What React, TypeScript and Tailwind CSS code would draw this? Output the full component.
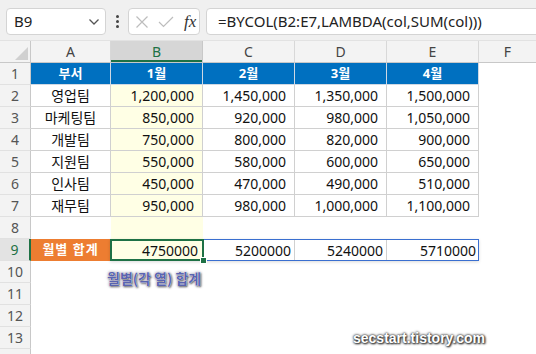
import React from "react";

const rows = [
  ["영업팀", "1,200,000", "1,450,000", "1,350,000", "1,500,000"],
  ["마케팅팀", "850,000", "920,000", "980,000", "1,050,000"],
  ["개발팀", "750,000", "800,000", "820,000", "900,000"],
  ["지원팀", "550,000", "580,000", "600,000", "650,000"],
  ["인사팀", "450,000", "470,000", "490,000", "510,000"],
  ["재무팀", "950,000", "980,000", "1,000,000", "1,100,000"],
];

function RowHead({ n, active }: { n?: number; active?: boolean }) {
  return (
    <div
      className={
        "w-[31px] shrink-0 h-full flex items-center justify-center text-[14px] border-b border-[#e1e1e1] " +
        (active
          ? "bg-[#e3e3e3] text-[#1e7145] border-r-2 border-r-[#1e7145]"
          : "bg-[#f3f3f3] text-[#555] border-r border-r-[#c8c8c8]")
      }
    >
      {n}
    </div>
  );
}

export default function App() {
  return (
    <div className="w-[536px] h-[354px] overflow-hidden bg-white relative font-['Noto_Sans','Noto_Sans_CJK_KR',sans-serif] text-[#111]">
      {/* toolbar */}
      <div className="h-[40px] bg-[#f0f0f0] flex items-start pt-[8px]">
        <div className="ml-[6px] shrink-0 w-[100px] h-[27px] bg-white border border-[#d4d4d4] rounded-[4px] flex items-center justify-between pl-[7px] pr-[5px] text-[15px] text-[#222]">
          <span>B9</span>
          <svg width="12" height="8" viewBox="0 0 12 8">
            <path d="M1.5 1.5 L6 6 L10.5 1.5" fill="none" stroke="#555" strokeWidth="1.3" />
          </svg>
        </div>
        <div className="ml-[10px] shrink-0 w-[3px] h-[27px] flex flex-col items-center justify-center gap-[2px]">
          <div className="w-[3px] h-[3px] rounded-full bg-[#444]" />
          <div className="w-[3px] h-[3px] rounded-full bg-[#444]" />
          <div className="w-[3px] h-[3px] rounded-full bg-[#444]" />
        </div>
        <div className="ml-[9px] shrink-0 w-[72px] h-[27px] bg-white border border-[#d4d4d4] rounded-[4px] flex items-center pl-[6px] gap-[9px]">
          <svg width="14" height="14" viewBox="0 0 14 14">
            <path d="M1.5 1.5 L12.5 12.5 M12.5 1.5 L1.5 12.5" stroke="#bdbdbd" strokeWidth="1.2" />
          </svg>
          <svg width="16" height="13" viewBox="0 0 16 13">
            <path d="M1 7 L5.5 11.5 L15 2" fill="none" stroke="#bdbdbd" strokeWidth="1.2" />
          </svg>
          <span className="font-['Liberation_Serif',serif] italic text-[17px] text-[#333] leading-none ml-[1px]">fx</span>
        </div>
        <div className="ml-[6px] w-[340px] shrink-0 h-[27px] bg-white border border-[#d4d4d4] rounded-[4px] flex items-center pl-[11px] text-[15px] text-[#222]">
          =BYCOL(B2:E7,LAMBDA(col,SUM(col)))
        </div>
      </div>

      {/* column headers */}
      <div className="flex h-[23px] bg-[#f3f3f3] border-t border-[#e2e2e2] border-b border-b-[#c8c8c8] text-[14px] text-[#444]">
        <div className="w-[31px] shrink-0 h-full border-r border-[#c8c8c8] flex items-end justify-end pr-[2px] pb-[2px]">
          <svg width="13" height="13" viewBox="0 0 13 13">
            <path d="M13 0 L13 13 L0 13 Z" fill="#d0d0d0" />
          </svg>
        </div>
        <div className="w-[80px] shrink-0 border-r border-[#d8d8d8] flex items-center justify-center">A</div>
        <div className="w-[92px] shrink-0 bg-[#d6d6d6] text-[#1e7145] shadow-[inset_0_-2px_0_#1e7145] border-r border-[#c8c8c8] flex items-center justify-center">B</div>
        <div className="w-[92px] shrink-0 border-r border-[#d8d8d8] flex items-center justify-center">C</div>
        <div className="w-[92px] shrink-0 border-r border-[#d8d8d8] flex items-center justify-center">D</div>
        <div className="w-[92px] shrink-0 border-r border-[#d8d8d8] flex items-center justify-center">E</div>
        <div className="flex-1 flex items-center justify-center">F</div>
      </div>

      {/* row 1 */}
      <div className="flex h-[22px]">
        <RowHead n={1} />
        {["부서", "1월", "2월", "3월", "4월"].map((t, i) => (
          <div
            key={i}
            className={
              (i === 0 ? "w-[80px]" : "w-[92px]") +
              " shrink-0 bg-[#0070c0] text-white font-bold text-[13px] flex items-center justify-center border-r border-b border-[#cfd8e3]"
            }
          >
            {t}
          </div>
        ))}
      </div>

      {rows.map((r, ri) => (
        <div key={ri} className="flex h-[22px]">
          <RowHead n={ri + 2} />
          <div className="w-[80px] shrink-0 flex items-center justify-center text-[14px] border-r border-b border-[#d0d0d0]">
            {r[0]}
          </div>
          {r.slice(1).map((v, ci) => (
            <div
              key={ci}
              className={
                "w-[92px] shrink-0 flex items-center justify-end pr-[8px] text-[14px] border-r border-b border-[#d0d0d0] " +
                (ci === 0 ? "bg-[#ffffe5]" : "")
              }
            >
              {v}
            </div>
          ))}
        </div>
      ))}

      {/* row 8 */}
      <div className="flex h-[22px]">
        <RowHead n={8} />
        <div className="w-[80px] shrink-0" />
        <div className="w-[92px] shrink-0 bg-[#ffffe5]" />
      </div>

      {/* row 9 */}
      <div className="flex h-[22px]">
        <RowHead n={9} active />
        <div className="w-[79px] shrink-0 bg-[#ed7d31] text-white font-bold text-[13px] flex items-center justify-center tracking-[1px]">
          월별 합계
        </div>
        <div className="relative flex w-[369px] shrink-0 text-[14px]">
          <div className="w-[93px] shrink-0 bg-[#ffffe5] flex items-center justify-end pr-[4px] border-r border-[#d0d0d0]">4750000</div>
          <div className="w-[92px] shrink-0 flex items-center justify-end pr-[3px] border-r border-[#d0d0d0]">5200000</div>
          <div className="w-[92px] shrink-0 flex items-center justify-end pr-[3px] border-r border-[#d0d0d0]">5240000</div>
          <div className="w-[92px] shrink-0 flex items-center justify-end pr-[3px]">5710000</div>
          <div className="absolute inset-0 border border-[#3a6fd0] pointer-events-none shadow-[0_1px_3px_rgba(0,0,0,0.15)]" />
          <div className="absolute left-0 top-0 w-[94px] h-[22px] border-2 border-[#1e7145] pointer-events-none" />
          <div className="absolute left-[90px] top-[18px] w-[7px] h-[7px] bg-[#1e7145] border border-white pointer-events-none" />
        </div>
      </div>

      {[10, 11, 12, 13].map((n) => (
        <div key={n} className="flex h-[22px]">
          <RowHead n={n} />
        </div>
      ))}
      <div className="flex h-[22px]">
        <RowHead />
      </div>

      {/* annotation */}
      <div className="absolute left-[107px] top-[268px] font-['Noto_Sans_CJK_KR',sans-serif] font-bold text-[14px] text-[#5a64b0] [text-shadow:0_0_1px_#fff,0_0_1px_#fff,1px_1px_2px_rgba(0,0,0,0.7),0_0_3px_rgba(40,40,90,0.6)]">
        월별(각 열) 합계
      </div>

      {/* watermark */}
      <div className="absolute left-[353px] top-[328px] font-['Liberation_Sans',sans-serif] font-bold text-[14px] text-white [text-shadow:0_0_2px_#333,1px_1px_2px_#222,0_0_3px_#444]">
        secstart.tistory.com
      </div>
    </div>
  );
}
